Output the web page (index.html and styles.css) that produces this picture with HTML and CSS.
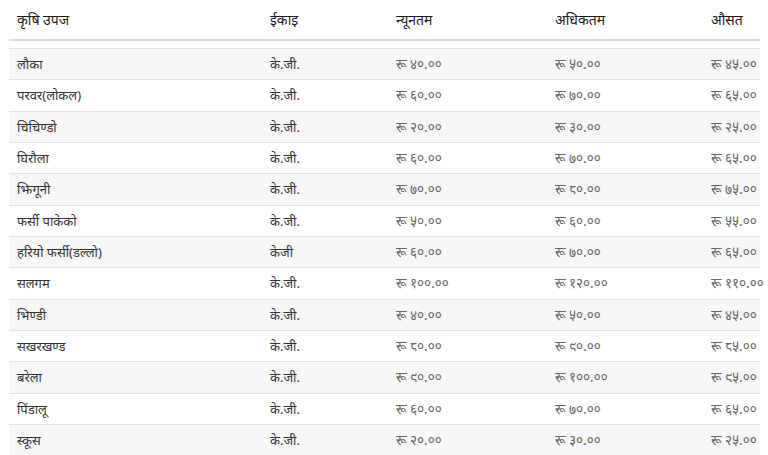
FILE: index.html
```html
<!DOCTYPE html>
<html lang="ne">
<head>
<meta charset="utf-8">
<link rel="stylesheet" href="styles.css">
</head>
<body>
<table class="prices">
  <colgroup>
    <col class="c1"><col class="c2"><col class="c3"><col class="c4"><col class="c5">
  </colgroup>
  <thead>
    <tr><th>कृषि उपज</th><th>ईकाइ</th><th>न्यूनतम</th><th>अधिकतम</th><th>औसत</th></tr>
  </thead>
  <tbody>
    <tr class="spacer"><td colspan="5"></td></tr>
    <tr class="odd"><td>लौका</td><td>के.जी.</td><td class="num">रू ४०.००</td><td class="num">रू ५०.००</td><td class="num">रू ४५.००</td></tr>
    <tr><td>परवर(लोकल)</td><td>के.जी.</td><td class="num">रू ६०.००</td><td class="num">रू ७०.००</td><td class="num">रू ६५.००</td></tr>
    <tr class="odd"><td>चिचिण्डो</td><td>के.जी.</td><td class="num">रू २०.००</td><td class="num">रू ३०.००</td><td class="num">रू २५.००</td></tr>
    <tr><td>घिरौला</td><td>के.जी.</td><td class="num">रू ६०.००</td><td class="num">रू ७०.००</td><td class="num">रू ६५.००</td></tr>
    <tr class="odd"><td>झिगूनी</td><td>के.जी.</td><td class="num">रू ७०.००</td><td class="num">रू ८०.००</td><td class="num">रू ७५.००</td></tr>
    <tr><td>फर्सी पाकेको</td><td>के.जी.</td><td class="num">रू ५०.००</td><td class="num">रू ६०.००</td><td class="num">रू ५५.००</td></tr>
    <tr class="odd"><td>हरियो फर्सी(डल्लो)</td><td>केजी</td><td class="num">रू ६०.००</td><td class="num">रू ७०.००</td><td class="num">रू ६५.००</td></tr>
    <tr><td>सलगम</td><td>के.जी.</td><td class="num">रू १००.००</td><td class="num">रू १२०.००</td><td class="num">रू ११०.००</td></tr>
    <tr class="odd"><td>भिण्डी</td><td>के.जी.</td><td class="num">रू ४०.००</td><td class="num">रू ५०.००</td><td class="num">रू ४५.००</td></tr>
    <tr><td>सखरखण्ड</td><td>के.जी.</td><td class="num">रू ८०.००</td><td class="num">रू ९०.००</td><td class="num">रू ८५.००</td></tr>
    <tr class="odd"><td>बरेला</td><td>के.जी.</td><td class="num">रू ९०.००</td><td class="num">रू १००.००</td><td class="num">रू ९५.००</td></tr>
    <tr><td>पिंडालू</td><td>के.जी.</td><td class="num">रू ६०.००</td><td class="num">रू ७०.००</td><td class="num">रू ६५.००</td></tr>
    <tr class="odd"><td>स्कूस</td><td>के.जी.</td><td class="num">रू २०.००</td><td class="num">रू ३०.००</td><td class="num">रू २५.००</td></tr>
  </tbody>
</table>
</body>
</html>
```
FILE: styles.css
```css
html, body {
  margin: 0;
  padding: 0;
  background: #fff;
}
body {
  padding: 0 8px 0 9px;
  font-family: "Noto Sans", "DejaVu Sans", sans-serif;
  color: #333;
  font-size: 13px;
}
.prices {
  width: 751px;
  border-collapse: collapse;
  table-layout: fixed;
}
.c1 { width: 253px; }
.c2 { width: 126px; }
.c3 { width: 159px; }
.c4 { width: 156px; }
.c5 { width: 57px; }
.prices th {
  text-align: left;
  font-weight: normal;
  font-size: 14px;
  color: #1a1a1a;
  height: 39px;
  padding: 0 8px;
  vertical-align: middle;
  border-bottom: 2px solid #dcdcdc;
  white-space: nowrap;
}
.prices td {
  height: 30.33px;
  padding: 0 8px;
  vertical-align: middle;
  border-top: 1px solid #e2e2e2;
  white-space: nowrap;
  line-height: 20px;
}
.prices tr.spacer td {
  height: 7px;
  padding: 0;
  border-top: none;
}
.prices tr.odd td {
  background: #f7f7f7;
}
.prices td.num {
  color: #666;
  font-size: 13.5px;
}
```
